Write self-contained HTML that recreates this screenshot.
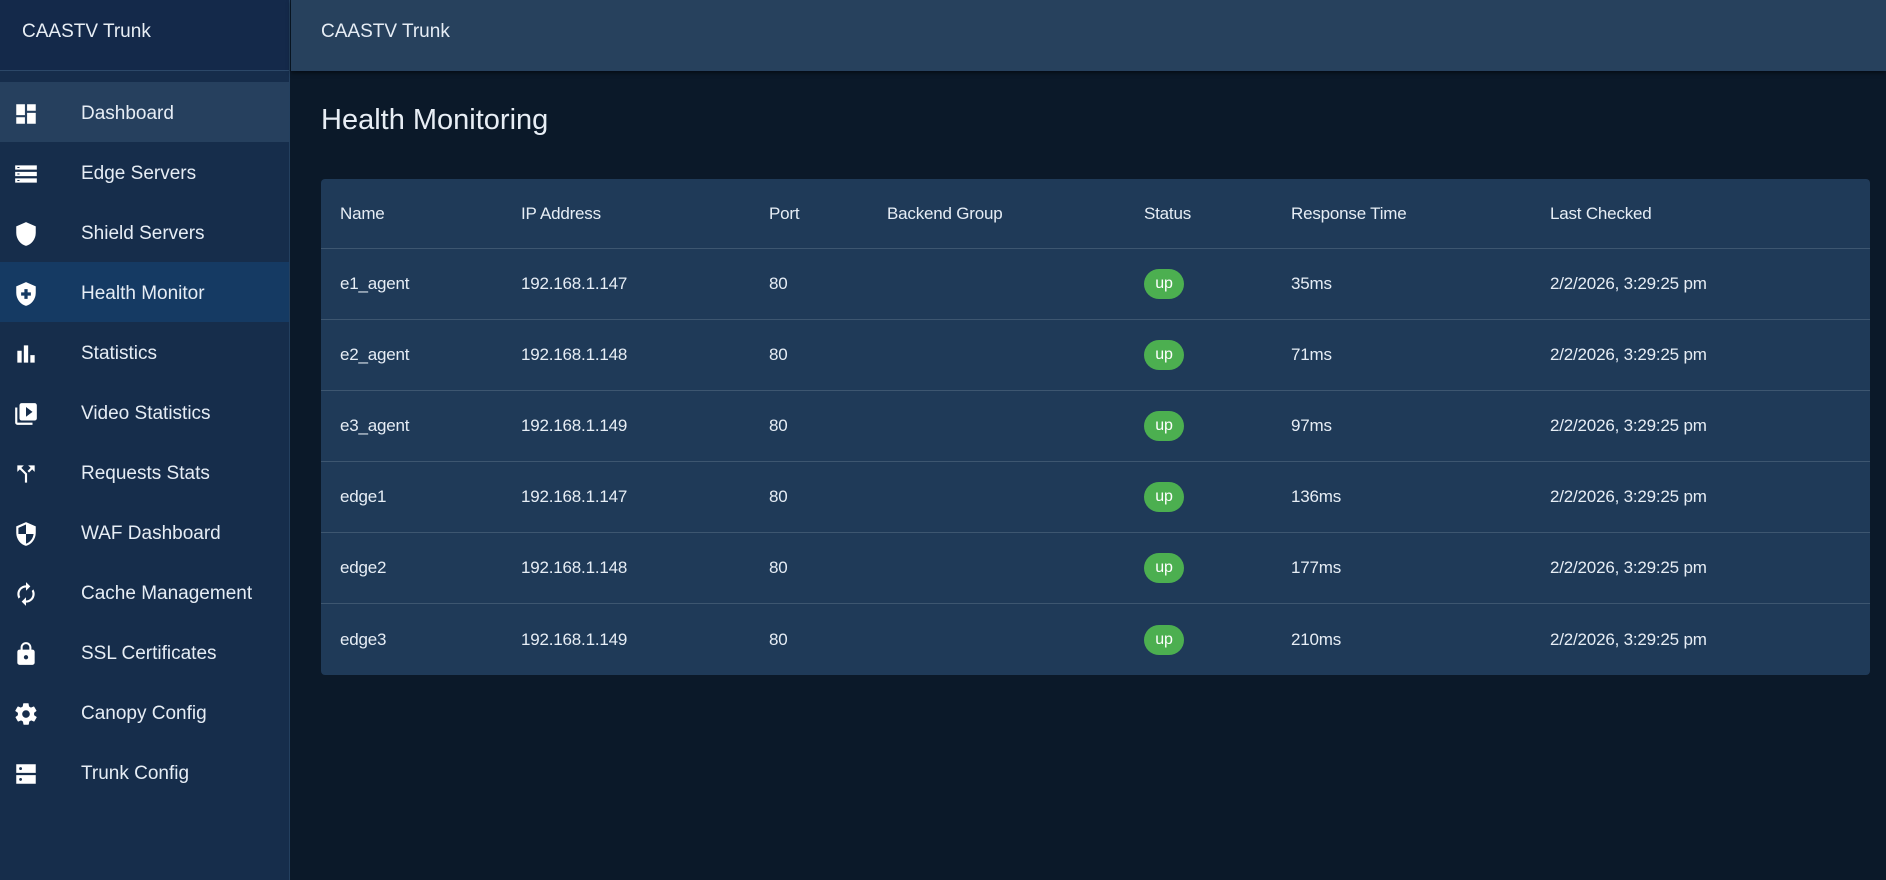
<!DOCTYPE html>
<html><head><meta charset="utf-8"><style>
*{margin:0;padding:0;box-sizing:border-box}
body{width:1886px;height:880px;background:#0b1929;font-family:"Liberation Sans",sans-serif;color:#e6edf5;overflow:hidden;position:relative}
.side{position:absolute;left:0;top:0;width:290px;height:880px;background:#162d4b;border-right:1px solid #24405f}
.brand{height:71px;border-bottom:1px solid #2c4868;padding:21px 0 0 22px;font-size:19px;color:#e8eef5;background:#14294a}
.nav{margin-top:11px}
.item{height:60px;display:flex;align-items:center;font-size:19px;color:#e6edf5;padding-top:3px}
.item svg{width:26px;height:26px;margin-left:13px;margin-right:42px;fill:#fff}
.item.dash{background:#26405e}
.item.act{background:#153a63}
.top{position:absolute;left:291px;top:0;right:0;height:71px;background:#27415d;box-shadow:0 2px 4px rgba(0,0,0,.5);padding:21px 0 0 30px;font-size:19px}
h1{position:absolute;left:321px;top:104px;font-size:29px;font-weight:normal;color:#e8eef5}
.tbl{position:absolute;left:321px;top:179px;width:1549px;background:#1f3a58;border-radius:4px;overflow:hidden}
.row{height:71px;position:relative;border-bottom:1px solid #3d5670;font-size:17px;letter-spacing:-0.2px}
.row:last-child{border-bottom:none}
.row.h{height:70px}
.row span{position:absolute;top:50%;transform:translateY(-50%)}
.b{background:#4caf50;color:#fff;border-radius:15px;width:40px;height:30px;display:flex;align-items:center;justify-content:center;font-size:16px}
</style></head><body>
<div class="side">
<div class="brand">CAASTV Trunk</div>
<div class="nav">
<div class="item dash"><svg viewBox="0 0 24 24"><path d="M3 13h8V3H3zm0 8h8v-6H3zm10 0h8V11h-8zm0-18v6h8V3z"/></svg>Dashboard</div>
<div class="item"><svg viewBox="0 0 24 24"><path d="M2 4h20v4H2zm0 6h20v4H2zm0 6h20v4H2z"/><path fill="#162d4b" d="M4 5.5h2v1H4zm0 6h2v1H4zm0 6h2v1H4z"/></svg>Edge Servers</div>
<div class="item"><svg viewBox="0 0 24 24"><path d="M12 1L3 5v6c0 5.5 3.8 10.7 9 12 5.2-1.3 9-6.5 9-12V5z"/></svg>Shield Servers</div>
<div class="item act"><svg viewBox="0 0 24 24"><path d="M12 1L3 5v6c0 5.5 3.8 10.7 9 12 5.2-1.3 9-6.5 9-12V5z"/><path fill="#153a63" d="M10.5 7.5h3v3h3v3h-3v3h-3v-3h-3v-3h3z"/></svg>Health Monitor</div>
<div class="item"><svg viewBox="0 0 24 24"><path d="M4 9h4v11H4zm6-5h4v16h-4zm6 9h4v7h-4z"/></svg>Statistics</div>
<div class="item"><svg viewBox="0 0 24 24"><path d="M4 6H2v14c0 1.1.9 2 2 2h14v-2H4zm16-4H8c-1.1 0-2 .9-2 2v12c0 1.1.9 2 2 2h12c1.1 0 2-.9 2-2V4c0-1.1-.9-2-2-2zm-8 12.5v-9l6 4.5z"/></svg>Video Statistics</div>
<div class="item"><svg viewBox="0 0 24 24"><path d="M14 4l2.3 2.3-2.9 2.9 1.4 1.4 2.9-2.9L20 10V4zM10 4H4v6l2.3-2.3 4.7 4.7V20h2v-8.4l-5.3-5.3z"/></svg>Requests Stats</div>
<div class="item"><svg viewBox="0 0 24 24"><path d="M12 1L3 5v6c0 5.5 3.8 10.7 9 12 5.2-1.3 9-6.5 9-12V5zm0 11h7c-.5 4.1-3.3 7.8-7 8.9V12H5V6.3l7-3.1z"/></svg>WAF Dashboard</div>
<div class="item"><svg viewBox="0 0 24 24"><path d="M12 6v3l4-4-4-4v3c-4.4 0-8 3.6-8 8 0 1.6.5 3 1.2 4.3L6.7 14.8C6.3 14 6 13 6 12c0-3.3 2.7-6 6-6zm6.8 1.7L17.3 9.2c.4.8.7 1.800.7 2.8 0 3.3-2.7 6-6 6v-3l-4 4 4 4v-3c4.4 0 8-3.6 8-8 0-1.6-.5-3-1.2-4.3z"/></svg>Cache Management</div>
<div class="item"><svg viewBox="0 0 24 24"><path d="M18 8h-1V6c0-2.8-2.2-5-5-5S7 3.2 7 6v2H6c-1.1 0-2 .9-2 2v10c0 1.1.9 2 2 2h12c1.1 0 2-.9 2-2V10c0-1.1-.9-2-2-2zm-6 9c-1.1 0-2-.9-2-2s.9-2 2-2 2 .9 2 2-.9 2-2 2zm3.1-9H8.9V6c0-1.7 1.4-3.1 3.1-3.1s3.1 1.4 3.1 3.1z"/></svg>SSL Certificates</div>
<div class="item"><svg viewBox="0 0 24 24"><path d="M19.4 13c.1-.3.1-.7.1-1s0-.7-.1-1l2.1-1.6c.2-.2.2-.4.1-.6l-2-3.5c-.1-.2-.4-.3-.6-.2l-2.5 1c-.5-.4-1.1-.7-1.7-1l-.4-2.6c0-.3-.2-.4-.5-.4h-4c-.2 0-.4.2-.5.4l-.4 2.6c-.6.3-1.2.6-1.7 1l-2.5-1c-.2-.1-.5 0-.6.2l-2 3.5c-.1.2-.1.5.1.6L4.6 11c0 .3-.1.7-.1 1s0 .7.1 1l-2.1 1.6c-.2.2-.2.4-.1.6l2 3.5c.1.2.4.3.6.2l2.5-1c.5.4 1.1.7 1.7 1l.4 2.6c0 .2.2.4.5.4h4c.2 0 .5-.2.5-.4l.4-2.6c.6-.3 1.2-.6 1.7-1l2.5 1c.2.1.5 0 .6-.2l2-3.5c.1-.2.1-.5-.1-.6zM12 15.5c-1.9 0-3.5-1.6-3.5-3.5s1.6-3.5 3.5-3.5 3.5 1.6 3.5 3.5-1.6 3.5-3.5 3.5z"/></svg>Canopy Config</div>
<div class="item"><svg viewBox="0 0 24 24"><path d="M3 3h18v8H3zm0 10h18v8H3z"/><circle cx="7" cy="7" r="1.3" fill="#162d4b"/><circle cx="7" cy="17" r="1.3" fill="#162d4b"/></svg>Trunk Config</div>
</div></div>
<div class="top">CAASTV Trunk</div>
<h1>Health Monitoring</h1>
<div class="tbl">
<div class="row h"><span style="left:19px">Name</span><span style="left:200px">IP Address</span><span style="left:448px">Port</span><span style="left:566px">Backend Group</span><span style="left:823px">Status</span><span style="left:970px">Response Time</span><span style="left:1229px">Last Checked</span></div>
<div class="row"><span style="left:19px">e1_agent</span><span style="left:200px">192.168.1.147</span><span style="left:448px">80</span><span class="b" style="left:823px">up</span><span style="left:970px">35ms</span><span style="left:1229px">2/2/2026, 3:29:25 pm</span></div>
<div class="row"><span style="left:19px">e2_agent</span><span style="left:200px">192.168.1.148</span><span style="left:448px">80</span><span class="b" style="left:823px">up</span><span style="left:970px">71ms</span><span style="left:1229px">2/2/2026, 3:29:25 pm</span></div>
<div class="row"><span style="left:19px">e3_agent</span><span style="left:200px">192.168.1.149</span><span style="left:448px">80</span><span class="b" style="left:823px">up</span><span style="left:970px">97ms</span><span style="left:1229px">2/2/2026, 3:29:25 pm</span></div>
<div class="row"><span style="left:19px">edge1</span><span style="left:200px">192.168.1.147</span><span style="left:448px">80</span><span class="b" style="left:823px">up</span><span style="left:970px">136ms</span><span style="left:1229px">2/2/2026, 3:29:25 pm</span></div>
<div class="row"><span style="left:19px">edge2</span><span style="left:200px">192.168.1.148</span><span style="left:448px">80</span><span class="b" style="left:823px">up</span><span style="left:970px">177ms</span><span style="left:1229px">2/2/2026, 3:29:25 pm</span></div>
<div class="row"><span style="left:19px">edge3</span><span style="left:200px">192.168.1.149</span><span style="left:448px">80</span><span class="b" style="left:823px">up</span><span style="left:970px">210ms</span><span style="left:1229px">2/2/2026, 3:29:25 pm</span></div>
</div>
</body></html>
